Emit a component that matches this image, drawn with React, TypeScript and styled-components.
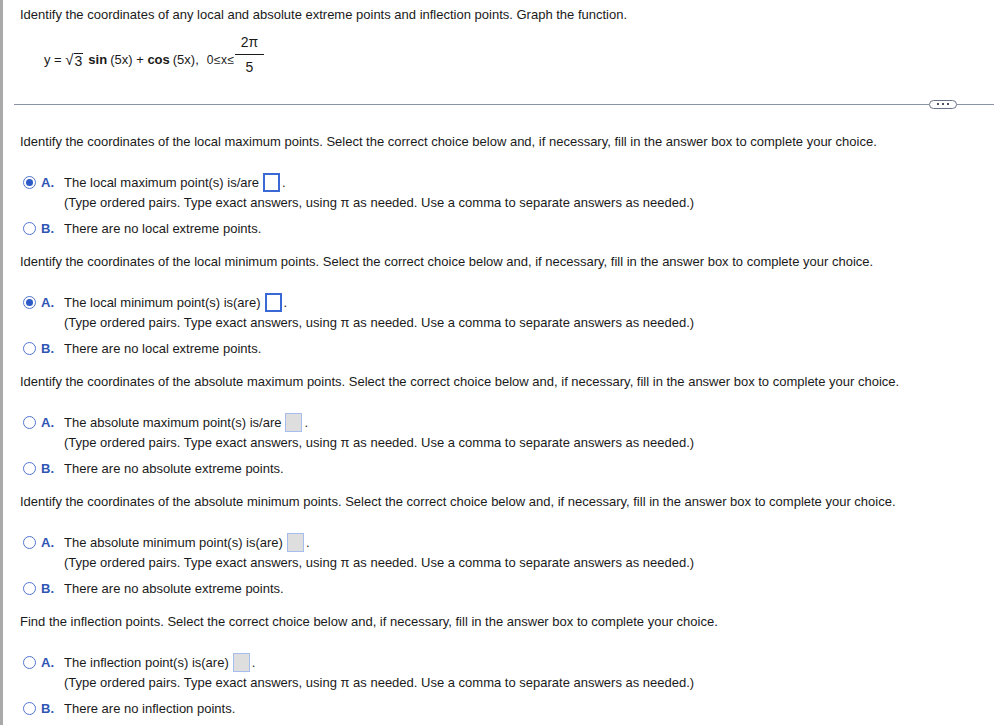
import * as React from "react";
import styled, { createGlobalStyle } from "styled-components";

const GlobalStyle = createGlobalStyle`
  html, body {
    margin: 0;
    padding: 0;
    background: #fff;
  }
  body {
    font-family: Arial, "Liberation Sans", sans-serif;
    color: #1a1a1a;
    font-size: 13px;
  }
`;

type Choice = {
  selected: boolean;
  filled: boolean;
  answerText: string;
  noneText: string;
};

type Question = { prompt: string } & Choice;

const questions: Question[] = [
  {
    prompt:
      "Identify the coordinates of the local maximum points. Select the correct choice below and, if necessary, fill in the answer box to complete your choice.",
    answerText: "The local maximum point(s) is/are",
    noneText: "There are no local extreme points.",
    selected: true,
    filled: false,
  },
  {
    prompt:
      "Identify the coordinates of the local minimum points. Select the correct choice below and, if necessary, fill in the answer box to complete your choice.",
    answerText: "The local minimum point(s) is(are)",
    noneText: "There are no local extreme points.",
    selected: true,
    filled: false,
  },
  {
    prompt:
      "Identify the coordinates of the absolute maximum points. Select the correct choice below and, if necessary, fill in the answer box to complete your choice.",
    answerText: "The absolute maximum point(s) is/are",
    noneText: "There are no absolute extreme points.",
    selected: false,
    filled: true,
  },
  {
    prompt:
      "Identify the coordinates of the absolute minimum points. Select the correct choice below and, if necessary, fill in the answer box to complete your choice.",
    answerText: "The absolute minimum point(s) is(are)",
    noneText: "There are no absolute extreme points.",
    selected: false,
    filled: true,
  },
  {
    prompt:
      "Find the inflection points. Select the correct choice below and, if necessary, fill in the answer box to complete your choice.",
    answerText: "The inflection point(s) is(are)",
    noneText: "There are no inflection points.",
    selected: false,
    filled: true,
  },
];

function App() {
  return (
    <>
      <GlobalStyle />
      <Page>
        <Title>
          Identify the coordinates of any local and absolute extreme points and
          inflection points. Graph the function.
        </Title>
        <Equation>
          <span>y = </span>
          <Radical>
            <RootSign>√</RootSign>
            <RootBody>3</RootBody>
          </Radical>
          <Fn>sin</Fn>
          <span>(5x) + </span>
          <Fn>cos</Fn>
          <span>(5x),</span>
          <Spacer />
          <Range>0≤x≤</Range>
          <Fraction>
            <Numer>2π</Numer>
            <Denom>5</Denom>
          </Fraction>
        </Equation>
        <Divider>
          <Line />
          <Pill>
            <Dot />
            <Dot />
            <Dot />
          </Pill>
          <Line $short />
        </Divider>
        {questions.map((q, idx) => (
          <Block key={idx}>
            <Prompt>{q.prompt}</Prompt>
            <ChoiceRow>
              <Radio $checked={q.selected} />
              <Letter>A.</Letter>
              <span>{q.answerText}</span>
              <AnswerBox $filled={q.filled} />
              <span>.</span>
            </ChoiceRow>
            <Hint>
              (Type ordered pairs. Type exact answers, using π as needed. Use a
              comma to separate answers as needed.)
            </Hint>
            <ChoiceRow $gapTop>
              <Radio $checked={false} />
              <Letter>B.</Letter>
              <span>{q.noneText}</span>
            </ChoiceRow>
          </Block>
        ))}
      </Page>
    </>
  );
}

export default App;

const Page = styled.div`
  min-height: 725px;
  border-left: 3px solid #a9a9a9;
  box-sizing: border-box;
  padding-top: 7px;
`;

const Title = styled.div`
  padding-left: 17px;
  line-height: 16px;
  font-size: 13px;
`;

const Equation = styled.div`
  display: flex;
  align-items: center;
  padding-left: 41px;
  margin-top: 11px;
  height: 51px;
  font-size: 13px;
  white-space: pre;
`;

const Radical = styled.span`
  display: inline-flex;
  align-items: flex-end;
  margin-right: 5px;
`;

const RootSign = styled.span`
  font-size: 15px;
  line-height: 16px;
`;

const RootBody = styled.span`
  border-top: 1px solid #1a1a1a;
  padding: 0 1px;
  line-height: 14px;
  font-size: 14px;
`;

const Fn = styled.span`
  font-weight: bold;
  margin-right: 3px;
`;

const Spacer = styled.span`
  width: 8px;
`;

const Range = styled.span`
  letter-spacing: 0.5px;
  font-size: 12px;
`;

const Fraction = styled.span`
  display: inline-flex;
  flex-direction: column;
  align-items: center;
  margin-bottom: 10px;
  font-size: 14px;
`;

const Numer = styled.span`
  padding: 0 6px 4px;
  border-bottom: 1px solid #1a1a1a;
  line-height: 16px;
`;

const Denom = styled.span`
  padding-top: 4px;
  line-height: 16px;
`;

const Divider = styled.div`
  display: flex;
  align-items: center;
  margin-top: 14px;
  padding-left: 11px;
  height: 10px;
`;

const Line = styled.div<{ $short?: boolean }>`
  height: 1px;
  background: #8a93a5;
  ${(p) => (p.$short ? "width: 37px;" : "flex: 1;")}
`;

const Pill = styled.div`
  width: 26px;
  height: 7px;
  border: 1.5px solid #6b7487;
  border-radius: 6px;
  display: flex;
  align-items: center;
  justify-content: center;
  gap: 3px;
`;

const Dot = styled.span`
  width: 2px;
  height: 2px;
  background: #4a5366;
`;

const Block = styled.div`
  padding-top: 25px;
  & + & {
    padding-top: 16px;
  }
`;

const Prompt = styled.div`
  padding-left: 17px;
  line-height: 16px;
  margin-bottom: 22px;
`;

const ChoiceRow = styled.div<{ $gapTop?: boolean }>`
  display: flex;
  align-items: center;
  height: 20px;
  padding-left: 20px;
  margin-top: ${(p) => (p.$gapTop ? "5px" : "0")};
`;

const Radio = styled.span<{ $checked: boolean }>`
  width: 11px;
  height: 11px;
  border-radius: 50%;
  border: 1.5px solid #5176cf;
  position: relative;
  flex-shrink: 0;
  &::after {
    content: "";
    display: ${(p) => (p.$checked ? "block" : "none")};
    position: absolute;
    left: 2px;
    top: 2px;
    width: 7px;
    height: 7px;
    border-radius: 50%;
    background: #2d5ac8;
  }
`;

const Letter = styled.span`
  color: #3155b4;
  font-weight: bold;
  margin-left: 5px;
  width: 23px;
`;

const AnswerBox = styled.span<{ $filled: boolean }>`
  display: inline-block;
  box-sizing: border-box;
  width: 17px;
  height: 19px;
  margin-left: 4px;
  margin-right: 2px;
  background: ${(p) => (p.$filled ? "#dedede" : "#fff")};
  border: ${(p) => (p.$filled ? "1px solid #a7bdee" : "2px solid #3a68d4")};
`;

const Hint = styled.div`
  padding-left: 61px;
  margin-top: 1px;
  line-height: 20px;
`;
